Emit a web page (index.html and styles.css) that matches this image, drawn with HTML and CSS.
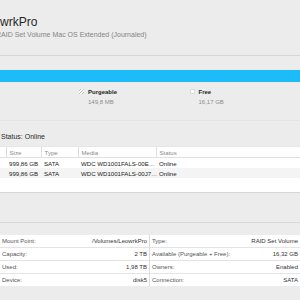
FILE: index.html
```html
<!DOCTYPE html>
<html lang="en">
<head>
  <meta charset="UTF-8" />
  <title>LeowrkPro</title>
  <link rel="stylesheet" href="styles.css">
</head>
<body>

  <header class="volume-head">
    <h1 class="volume-name">LeowrkPro</h1>
    <p class="volume-kind">RAID Set Volume Mac OS Extended (Journaled)</p>
  </header>

  <section class="usage">
    <div class="usage-bar"></div>
    <div class="legend">
      <div class="legend-item">
        <span class="swatch swatch-purgeable"></span>
        <div>
          <div class="legend-title">Purgeable</div>
          <div class="legend-size">149,8 MB</div>
        </div>
      </div>
      <div class="legend-item">
        <span class="swatch swatch-free"></span>
        <div>
          <div class="legend-title">Free</div>
          <div class="legend-size">16,17 GB</div>
        </div>
      </div>
    </div>
  </section>

  <section class="raid">
    <div class="raid-status">Status: Online</div>
    <div class="members">
      <table>
        <colgroup>
          <col style="width:6px">
          <col style="width:35px">
          <col style="width:37px">
          <col style="width:78px">
          <col>
        </colgroup>
        <thead>
          <tr><th></th><th>Size</th><th>Type</th><th>Media</th><th>Status</th></tr>
        </thead>
        <tbody>
          <tr><td></td><td>999,86 GB</td><td>SATA</td><td>WDC WD1001FALS-00E…</td><td>Online</td></tr>
          <tr class="alt"><td></td><td>999,86 GB</td><td>SATA</td><td>WDC WD1001FALS-00J7…</td><td>Online</td></tr>
        </tbody>
      </table>
    </div>
  </section>

  <div class="empty-pane"></div>

  <section class="info">
    <div class="info-col">
      <div class="info-row"><span>Mount Point:</span><span class="val">/Volumes/LeowrkPro</span></div>
      <div class="info-row"><span>Capacity:</span><span class="val">2 TB</span></div>
      <div class="info-row"><span>Used:</span><span class="val">1,98 TB</span></div>
      <div class="info-row"><span>Device:</span><span class="val">disk5</span></div>
    </div>
    <div class="info-col">
      <div class="info-row"><span>Type:</span><span class="val">RAID Set Volume</span></div>
      <div class="info-row"><span>Available (Purgeable + Free):</span><span class="val">16,32 GB</span></div>
      <div class="info-row"><span>Owners:</span><span class="val">Enabled</span></div>
      <div class="info-row"><span>Connection:</span><span class="val">SATA</span></div>
    </div>
  </section>

</body>
</html>
```

FILE: styles.css
```css
body {
  margin: 0;
  width: 300px;
  height: 300px;
  overflow: hidden;
  background-color: #ececec;
  font-family: "Liberation Sans", Arial, sans-serif;
  color: #2a2a2a;
}

.volume-head {
  height: 56px;
  padding-top: 15px;
  box-sizing: border-box;
  border-bottom: 1px solid #d6d6d6;
}
.volume-name {
  margin: 0 0 0 -20px;
  font-size: 12px;
  line-height: 14px;
  font-weight: normal;
  color: #262626;
  white-space: nowrap;
}
.volume-kind {
  margin: 1px 0 0 -4px;
  font-size: 7px;
  line-height: 9px;
  color: #858585;
  white-space: nowrap;
}

.usage {
  padding: 14px 0 14px;
  border-bottom: 1px solid #e2e2e2;
}
.usage-bar {
  height: 12px;
  background-color: #1dbbf8;
}
.legend {
  display: flex;
  margin: 6px 0 0 79px;
  height: 18px;
}
.legend-item {
  display: flex;
  gap: 4px;
  width: 146px;
}
.swatch {
  width: 5px;
  height: 5px;
  margin-top: 1px;
  box-sizing: border-box;
  border-radius: 1px;
  background-color: #fff;
}
.swatch-purgeable {
  background: repeating-linear-gradient(-45deg, #fff 0 1px, #b8b8b8 1px 2px);
}
.swatch-free {
  border: 1px solid #d8d8d8;
}
.legend-title {
  font-size: 6px;
  line-height: 8px;
  font-weight: bold;
  color: #262626;
}
.legend-size {
  margin-top: 2px;
  font-size: 6px;
  line-height: 8px;
  color: #8c8c8c;
}

.raid {
  padding-top: 11px;
}
.raid-status {
  font-size: 7px;
  line-height: 9px;
  color: #2a2a2a;
  padding-left: 1px;
}
.members {
  margin-top: 5px;
  height: 46px;
  background-color: #fff;
  border-bottom: 1px solid #d6d6d6;
}
.members table {
  width: 100%;
  table-layout: fixed;
  border-collapse: collapse;
  font-size: 6.1px;
}
.members th {
  height: 11px;
  padding: 0 0 0 3px;
  text-align: left;
  font-weight: normal;
  color: #8a8a8a;
  border-left: 1px solid #e0e0e0;
  border-top: 1px solid #e6e6e6;
  border-bottom: 1px solid #e0e0e0;
  box-sizing: border-box;
}
.members th:first-child {
  border-left: none;
}
.members td {
  height: 10px;
  padding: 0 0 0 3px;
  white-space: nowrap;
  color: #222;
}
.members tr.alt td {
  background-color: #f4f4f4;
}

.empty-pane {
  height: 29px;
  border-bottom: 1px solid #d9d9d9;
  margin-bottom: 12px;
}

.info {
  display: flex;
  background-color: #fff;
}
.info-col {
  width: 149px;
  border-right: 1px solid #dcdcdc;
}
.info-col:last-child {
  flex: 1;
  border-right: none;
}
.info-row {
  display: flex;
  justify-content: space-between;
  align-items: center;
  height: 12px;
  padding: 0 2px;
  font-size: 6px;
  color: #555;
  border-bottom: 1px solid #e4e4e4;
}
.info-row:last-child {
  border-bottom: none;
}
.info-row .val {
  color: #333;
}
```
